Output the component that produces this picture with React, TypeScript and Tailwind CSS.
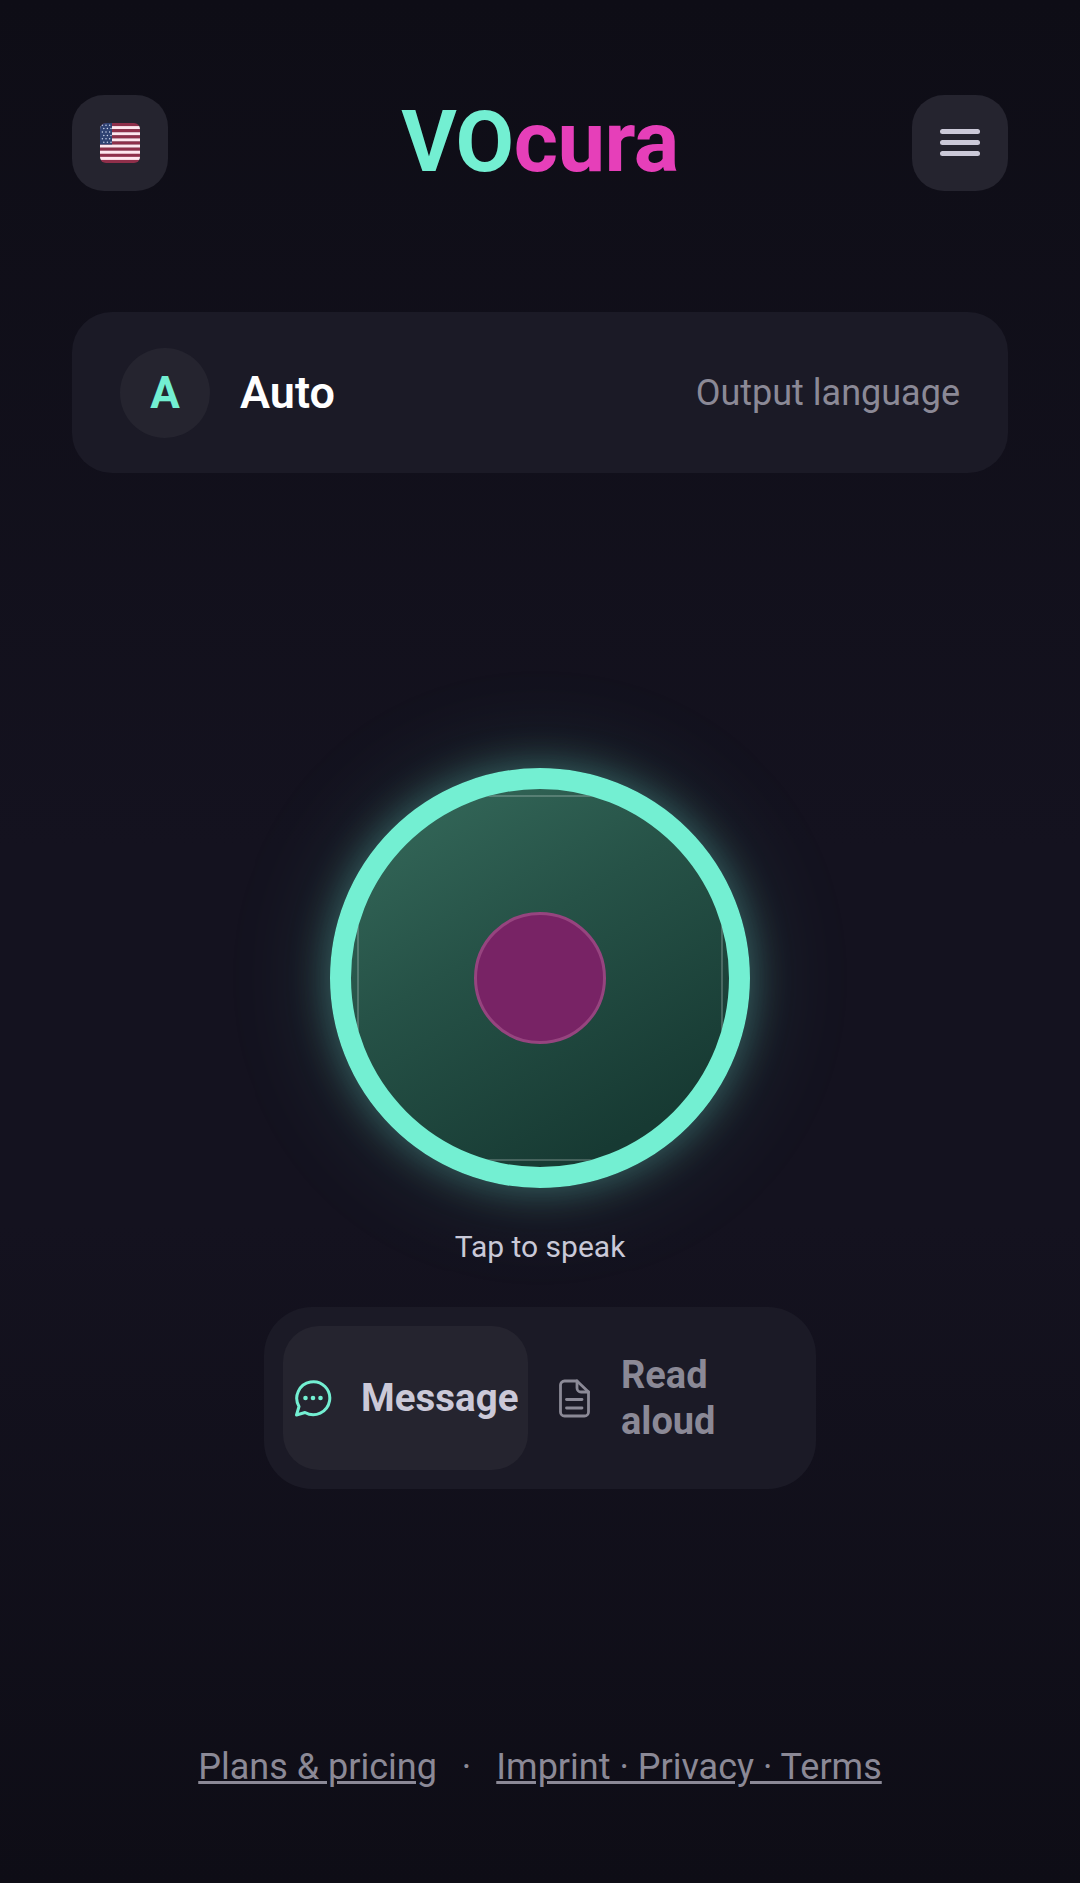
import React from 'react'

const font = { fontFamily: 'Roboto, sans-serif' }

const FlagIcon = () => {
  const stripes = [0, 1, 2, 3, 4, 5, 6, 7, 8, 9, 10, 11, 12]
  return (
    <svg width="40" height="40" viewBox="0 0 40 40" className="blur-[0.5px]">
      <defs>
        <clipPath id="flag-clip">
          <rect x="0" y="0" width="40" height="40" rx="6" />
        </clipPath>
      </defs>
      <g clipPath="url(#flag-clip)">
        {stripes.map((i) => (
          <rect
            key={i}
            x="0"
            y={(i * 40) / 13}
            width="40"
            height={40 / 13 + 0.2}
            fill={i % 2 === 0 ? '#8f2f4a' : '#ffe6ee'}
          />
        ))}
        <rect x="0" y="0" width="12" height="21.5" fill="#2f4272" />
        {[0, 1, 2, 3, 4, 5].map((r) =>
          [0, 1, 2].map((c) => (
            <circle key={`${r}-${c}`} cx={2.4 + c * 3.6 + (r % 2) * 1.4} cy={2.2 + r * 3.4} r="0.75" fill="#c9d2ea" />
          )),
        )}
      </g>
    </svg>
  )
}

const MessageIcon = () => (
  <svg width="40" height="40" viewBox="0 0 40 40" fill="none" stroke="#73efd2" strokeWidth="3" strokeLinecap="round" strokeLinejoin="round">
    <path d="M3.5 37 L6 28.5 A16.5 16.5 0 1 1 12 34.5 Z" />
    <circle cx="12.5" cy="20" r="2.3" fill="#73efd2" stroke="none" />
    <circle cx="20" cy="20" r="2.3" fill="#73efd2" stroke="none" />
    <circle cx="27.5" cy="20" r="2.3" fill="#73efd2" stroke="none" />
  </svg>
)

const DocIcon = () => (
  <svg width="40" height="40" viewBox="0 0 40 40" fill="none" stroke="#8b8996" strokeWidth="2.8" strokeLinecap="round" strokeLinejoin="round">
    <path d="M24 3 H11.5 A4 4 0 0 0 7.5 7 V34 A4 4 0 0 0 11.5 38 H31.5 A4 4 0 0 0 35.5 34 V14 Z" />
    <path d="M24 3 V10 A4 4 0 0 0 28 14 H35.5" />
    <path d="M13.5 21.5 H29" />
    <path d="M13.5 30 H29" />
  </svg>
)

export default function App() {
  return (
    <div
      className="flex h-[1883px] w-full flex-col overflow-hidden bg-[linear-gradient(180deg,#0e0d16_0%,#14121f_45%,#14121f_65%,#0e0d16_100%)] px-[72px] pt-[95px]"
      style={font}
    >
      <header className="flex items-center justify-between">
        <button className="flex h-[96px] w-[96px] items-center justify-center rounded-[32px] bg-[#25242f]">
          <FlagIcon />
        </button>
        <h1 className="h-[96px] text-[85px] leading-[94px] font-bold tracking-[-0.5px]">
          <span className="text-[#73efd2]">VO</span>
          <span className="text-[#e63fb9]">cura</span>
        </h1>
        <button className="flex h-[96px] w-[96px] flex-col items-center justify-center gap-[6px] rounded-[32px] bg-[#25242f] pb-[2px]">
          <span className="h-[5px] w-[40px] rounded-full bg-[#cbc9d8]" />
          <span className="h-[5px] w-[40px] rounded-full bg-[#cbc9d8]" />
          <span className="h-[5px] w-[40px] rounded-full bg-[#cbc9d8]" />
        </button>
      </header>

      <section className="mt-[121px] flex h-[161px] items-center rounded-[40px] bg-[#1b1a26] px-[48px]">
        <div className="flex h-[90px] w-[90px] items-center justify-center rounded-full bg-[#25242f] text-[44px] font-bold text-[#73efd2]">
          A
        </div>
        <div className="ml-[30px] text-[45px] font-semibold text-white">Auto</div>
        <div className="ml-auto text-[36px] text-[#8b8996]">Output language</div>
      </section>

      <main className="mt-[295px] flex flex-col items-center">
        <button className="relative flex h-[420px] w-[420px] items-center justify-center overflow-hidden rounded-full border-[21px] border-[#73efd2] bg-[linear-gradient(150deg,#366b5c_0%,#265247_40%,#173a33_85%)] shadow-[0_0_40px_rgba(115,239,210,0.36),0_0_110px_rgba(115,239,210,0.15)]">
          <span className="absolute inset-[6px] border-2 border-white/20" />
          <span className="h-[132px] w-[132px] rounded-full border-[3px] border-[#96447f] bg-[#782365]" />
        </button>
        <p className="mt-[40px] text-[30px] leading-[38px] text-[#cbc9d8]">Tap to speak</p>

        <div className="mt-[41px] flex h-[182px] w-[552px] rounded-[48px] bg-[#1b1a26] p-[19px]">
          <div className="flex w-[245px] shrink-0 items-center rounded-[36px] bg-[#25242f] pl-[10px] text-[38.5px] font-bold text-[#cbc9d8]">
            <MessageIcon />
            <span className="ml-[28px]">Message</span>
          </div>
          <div className="flex flex-1 items-center pl-[25px] text-[38px] leading-[46px] font-bold text-[#8b8996]">
            <DocIcon />
            <span className="ml-[28px] w-[110px]">Read aloud</span>
          </div>
        </div>
      </main>

      <footer className="mt-auto mb-[92px] flex items-center justify-center text-[36px] leading-[48px] text-[#8b8996]">
        <a className="underline">Plans &amp; pricing</a>
        <span className="mx-[25px]">·</span>
        <a className="underline">Imprint · Privacy · Terms</a>
      </footer>
    </div>
  )
}
